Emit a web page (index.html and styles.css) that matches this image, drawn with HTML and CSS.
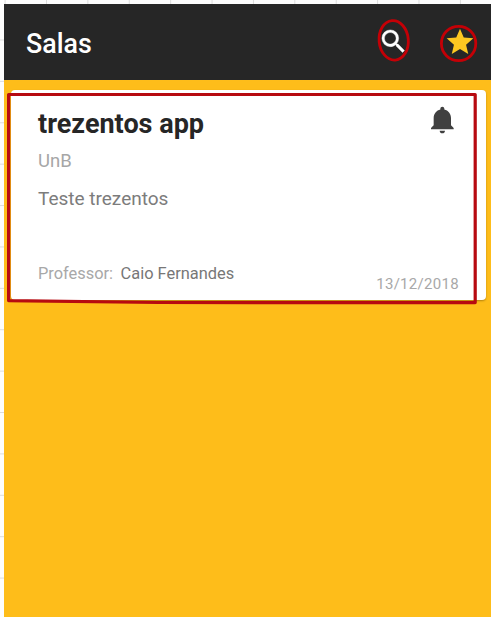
FILE: index.html
```html
<!DOCTYPE html>
<html lang="pt-BR">
<head>
<meta charset="utf-8">
<title>Salas</title>
<link rel="stylesheet" href="styles.css">
</head>
<body>
<div class="app">
  <header class="bar">
    <h1 class="bar-title">Salas</h1>
    <svg class="icon-search" viewBox="0 0 24 24"><path d="M15.5 14h-.79l-.28-.27A6.471 6.471 0 0 0 16 9.5 6.5 6.5 0 1 0 9.5 16c1.61 0 3.09-.59 4.23-1.57l.27.28v.79l5 4.99L20.49 19l-4.99-5zm-6 0C7.01 14 5 11.99 5 9.5S7.01 5 9.5 5 14 7.01 14 9.5 11.99 14 9.5 14z"/></svg>
    <svg class="icon-star" viewBox="0 0 24 24"><path d="M12 17.27L18.18 21l-1.64-7.03L22 9.24l-7.19-.61L12 2 9.19 8.63 2 9.24l5.46 4.73L5.82 21z"/></svg>
  </header>
  <main class="content">
    <article class="card">
      <div class="info">
        <h2 class="name">trezentos app</h2>
        <p class="school">UnB</p>
        <p class="desc">Teste trezentos</p>
        <p class="teacher"><span class="label">Professor:</span><span class="person">Caio Fernandes</span></p>
      </div>
      <div class="side">
        <svg class="icon-bell" viewBox="0 0 24 24"><path d="M11.5 22c1.1 0 2-.9 2-2h-4c0 1.1.9 2 2 2zm6.5-6v-5.5c0-3.07-2.13-5.64-5-6.32V3.5c0-.83-.67-1.5-1.5-1.5S10 2.67 10 3.5v.68c-2.87.68-5 3.25-5 6.32V16l-2 2v1h17v-1l-2-2z"/></svg>
        <time class="date">13/12/2018</time>
      </div>
    </article>
  </main>
</div>
<svg class="marks" viewBox="0 0 491 617">
  <ellipse cx="393.7" cy="40.3" rx="14.6" ry="19.8" transform="rotate(-5 393.7 40.3)"/>
  <ellipse cx="458.6" cy="43.5" rx="17.2" ry="17.2"/>
  <path class="frame" d="M8.6 94.5H475.2V302.6L158 302.5L8.6 300.6Z"/>
</svg>
</body>
</html>
```
FILE: styles.css
```css
* { box-sizing: border-box; margin: 0; padding: 0; }

body {
  width: 491px;
  height: 617px;
  overflow: hidden;
  padding: 4px 0 0 4px;
  font-family: Roboto, "Liberation Sans", sans-serif;
  background-color: #fdfdfd;
  background-image:
    linear-gradient(to right, #dcdcdc 1px, transparent 1px),
    linear-gradient(to bottom, #dcdcdc 1px, transparent 1px);
  background-size: 41.4px 41.4px;
  background-position: 4.6px 39.5px;
}

.app { display: flex; flex-direction: column; height: 613px; background: #febd1a; }

.bar {
  display: flex;
  align-items: flex-start;
  height: 76px;
  padding: 22px 15.5px 0 22px;
  background: #262626;
}

.bar-title {
  flex: 1;
  font-size: 26.8px;
  line-height: 36px;
  font-weight: 500;
  color: #fff;
}

.icon-search { width: 31px; height: 31px; fill: #fff; stroke: #fff; stroke-width: .3; margin-right: 34.5px; }
.icon-star { width: 32px; height: 32px; fill: #fdc821; }

.content { padding: 10px 5px 0 7px; }

.card {
  display: flex;
  justify-content: space-between;
  height: 210px;
  padding: 14px 27px 0 27px;
  background: #fff;
  border-radius: 4px;
  box-shadow: 0 1px 2px rgba(90, 60, 0, .45);
}

.name { font-size: 27px; line-height: 40px; font-weight: 700; color: #262626; }
.school { margin-top: 4px; font-size: 18.5px; line-height: 26px; color: #a6a6a6; }
.desc { margin-top: 12px; font-size: 19px; line-height: 26px; color: #7c7c7c; }
.teacher { display: flex; gap: 7.5px; margin-top: 50px; font-size: 16.4px; line-height: 24px; }
.label { color: #a8a8a8; }
.person { color: #777; }

.side { display: flex; flex-direction: column; align-items: flex-end; }
.icon-bell { flex: none; width: 32px; height: 32px; fill: #404040; }
.date { margin-top: 136px; font-size: 15px; line-height: 24px; letter-spacing: .3px; color: #a8a8a8; }

.marks {
  position: absolute;
  left: 0;
  top: 0;
  width: 491px;
  height: 617px;
  fill: none;
  stroke: #c40006;
  stroke-width: 2.8;
}
.frame { stroke: #b70a10; stroke-width: 3.2; stroke-linejoin: round; }
```
